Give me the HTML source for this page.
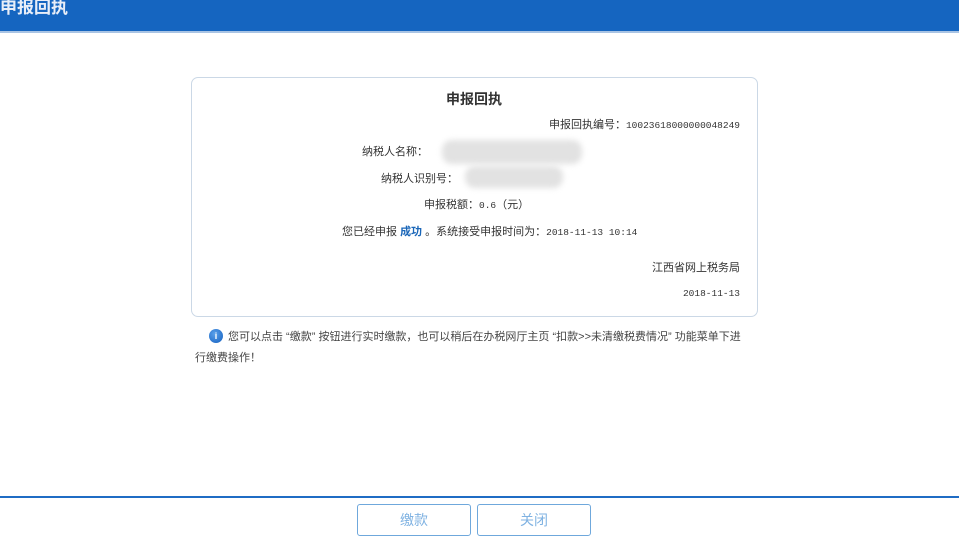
<!DOCTYPE html>
<html><head><meta charset="utf-8"><style>
body{margin:0;width:959px;height:545px;background:#fff;position:relative;overflow:hidden;font-family:"Liberation Sans","Noto Sans CJK SC",sans-serif;font-size:11px;color:#333}
.hd{position:absolute;left:0;top:0;width:959px;height:31px;background:#1565c0;border-bottom:2px solid #a9c4e4}
.hd span{position:absolute;left:0;top:-7px;color:#e8eef8;font-size:17px;font-weight:bold}
.card{position:absolute;left:191px;top:77px;width:565px;height:238px;border:1px solid #cbd8e6;border-radius:7px}
.t{position:absolute;white-space:nowrap;line-height:14px}
.m{font-family:"Liberation Mono","Noto Sans CJK SC",monospace;font-size:9.5px}
.blur{position:absolute;background:#e2e2e2;filter:blur(3px)}
.line{position:absolute;left:0;top:496px;width:959px;height:2px;background:#1f6cc4}
.btn{position:absolute;top:504px;width:112px;height:30px;border:1px solid #6fa8dc;border-radius:3px;color:#7fb2e2;font-size:14px;text-align:center;line-height:30px}
</style></head><body>
<div class="hd"><span>申报回执</span></div>
<div class="card"></div>
<div class="t" style="left:446px;top:92px;font-size:14px;font-weight:bold">申报回执</div>
<div class="t" style="right:219px;top:118px">申报回执编号：<span class="m">10023618000000048249</span></div>
<div class="t" style="right:531px;top:145px">纳税人名称：</div>
<div class="blur" style="left:442px;top:140px;width:140px;height:24px;border-radius:10px"></div>
<div class="t" style="right:501px;top:172px">纳税人识别号：</div>
<div class="blur" style="left:465px;top:166px;width:98px;height:22px;border-radius:10px"></div>
<div class="t" style="left:424px;top:198px">申报税额：<span class="m">0.6</span>（元）</div>
<div class="t" style="left:342px;top:225px">您已经申报 <b style="color:#1a66b8">成功</b> 。系统接受申报时间为：<span class="m">2018-11-13 10:14</span></div>
<div class="t" style="right:219px;top:261px">江西省网上税务局</div>
<div class="t m" style="right:219px;top:287px">2018-11-13</div>
<div style="position:absolute;left:209px;top:329px;width:14px;height:14px;border-radius:50%;background:radial-gradient(circle at 40% 35%,#5aa0ea,#1560c0);color:#fff;font-size:9px;text-align:center;line-height:14px;font-weight:bold">i</div>
<div class="t" style="left:228px;top:330px;color:#444">您可以点击 “缴款” 按钮进行实时缴款，也可以稍后在办税网厅主页 “扣款>>未清缴税费情况” 功能菜单下进</div>
<div class="t" style="left:195px;top:351px;color:#444">行缴费操作！</div>
<div class="line"></div>
<div class="btn" style="left:357px">缴款</div>
<div class="btn" style="left:477px">关闭</div>
</body></html>
